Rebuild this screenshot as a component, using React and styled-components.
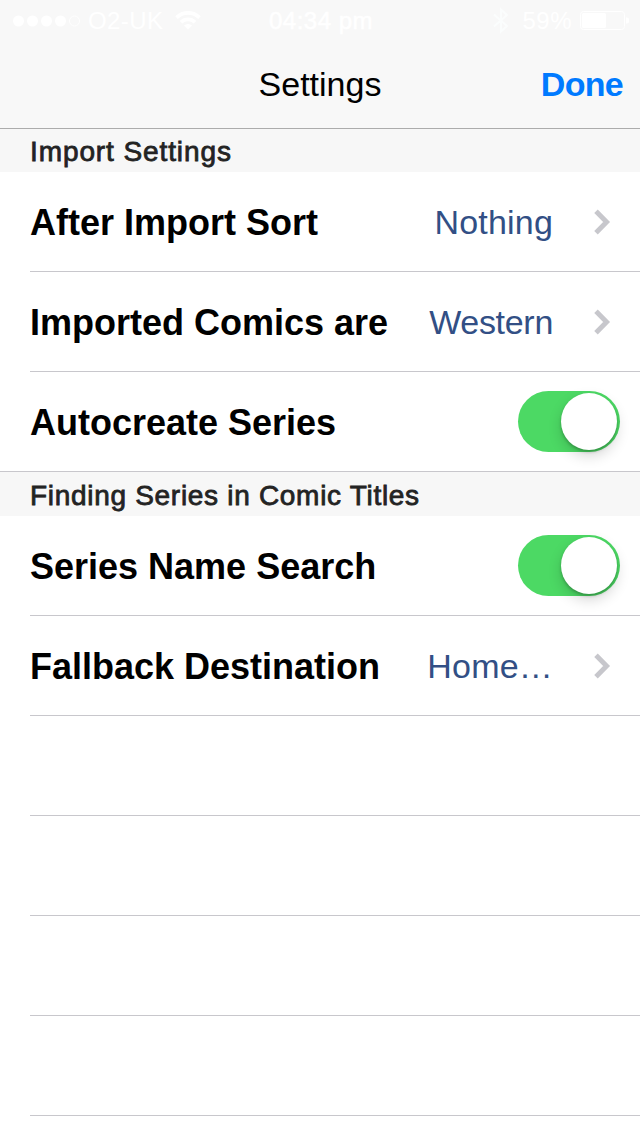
import React from 'react';
import styled, { createGlobalStyle } from 'styled-components';

const GlobalStyle = createGlobalStyle`
  * {
    box-sizing: border-box;
  }

  body {
    margin: 0;
    background: white;
    font-family: 'Liberation Sans', Arial, sans-serif;
  }
`;

const Screen = styled.div`
  width: 640px;
  height: 1136px;
  overflow: hidden;
  background: white;
`;

const Header = styled.header`
  height: 129px;
  background: #f8f8f8;
  border-bottom: 1px solid #acacac;
`;

const StatusBar = styled.div`
  display: grid;
  grid-template-columns: 1fr auto 1fr;
  height: 40px;
  padding: 0 11px 0 13px;
  color: white;
  font-size: 24px;
  line-height: 41px;

  svg {
    display: block;
  }
`;

const StatusGroup = styled.div`
  display: flex;
  align-items: center;
  justify-content: ${({ $end }) => ($end ? 'flex-end' : 'flex-start')};
  gap: 8px;
`;

const Carrier = styled.span`
  margin: 0 4px 0 -1px;
  letter-spacing: 0.4px;
`;

const Percent = styled.span`
  margin-left: 5px;
  letter-spacing: 0.5px;
`;

const Clock = styled.span`
  -webkit-text-stroke: 0.6px white;
  letter-spacing: 0.5px;
`;

const NavBar = styled.nav`
  display: grid;
  grid-template-columns: 1fr auto 1fr;
  align-items: center;
  height: 88px;
  padding-right: 17px;
`;

const Title = styled.h1`
  grid-column: 2;
  margin: 0 0 0 17px;
  font-size: 34px;
  font-weight: normal;
  line-height: 40px;
`;

const DoneButton = styled.button`
  justify-self: end;
  padding: 0;
  border: 0;
  background: none;
  color: #007aff;
  font: bold 34px/40px 'Liberation Sans', Arial, sans-serif;
  letter-spacing: -0.7px;
`;

const SectionHeader = styled.h2`
  height: ${({ $first }) => ($first ? '43px' : '44px')};
  margin: 0;
  padding: ${({ $first }) => ($first ? '7px' : '8px')} 0 0 30px;
  background: #f7f7f7;
  color: #232323;
  font-size: 28px;
  font-weight: normal;
  line-height: 32px;
  letter-spacing: ${({ $first }) => ($first ? '0.9px' : '0.7px')};
  -webkit-text-stroke: 0.8px #232323;
`;

const Row = styled.div`
  display: flex;
  align-items: center;
  height: 100px;
  margin-left: ${({ $last }) => ($last ? '0' : '30px')};
  padding-left: ${({ $last }) => ($last ? '30px' : '0')};
  padding-right: 20px;
  border-bottom: 1px solid #c8c7cc;
`;

const Label = styled.span`
  flex: 1;
  padding-top: 2px;
  font-size: 36px;
  font-weight: bold;
  line-height: 42px;
  white-space: nowrap;
`;

const Value = styled.span`
  margin-right: 41px;
  color: #324f85;
  font-size: 34px;
  line-height: 40px;
  letter-spacing: ${({ $tracking = '0.2px' }) => $tracking};
`;

const Toggle = styled.div`
  display: flex;
  justify-content: flex-end;
  align-items: flex-start;
  width: 102px;
  height: 61px;
  padding: 2px 3px;
  border-radius: 31px;
  background: #4cd964;
`;

const Knob = styled.div`
  width: 56px;
  height: 57px;
  border-radius: 50%;
  background: white;
  box-shadow: 0 6px 14px rgba(0, 0, 0, 0.16), 0 2px 3px rgba(0, 0, 0, 0.22);
`;

const Disclosure = styled.svg`
  margin: 1px 9px 0 0;
`;

const Chevron = () => (
  <Disclosure width="17" height="26" viewBox="0 0 17 26" fill="none">
    <path d="M2 2.2 L12.6 13 L2 23.8" stroke="#c7c7cc" strokeWidth="4.9" />
  </Disclosure>
);

const Signal = () => (
  <svg width="68" height="12" viewBox="0 0 68 12" fill="white">
    {[5.5, 19.5, 33.5, 47.5].map((cx) => (
      <circle key={cx} cx={cx} cy="6" r="5.5" />
    ))}
    <circle cx="61.5" cy="6" r="5" fill="none" stroke="white" />
  </svg>
);

const Wifi = () => (
  <svg width="26" height="19" viewBox="0 0 26 19" fill="none" stroke="white" strokeWidth="3.6">
    <path d="M1.5 6.6 a16.3 16.3 0 0 1 23 0" />
    <path d="M6 11.2 a10 10 0 0 1 14 0" />
    <path d="M13 18.5 L9 14.6 a5.7 5.7 0 0 1 8 0 Z" fill="white" stroke="none" />
  </svg>
);

const Bluetooth = () => (
  <svg width="16" height="27" viewBox="0 0 16 27" fill="none" stroke="#fbfdfd" strokeWidth="2">
    <path d="M1 7.5 L14 19 L8 24.5 V2.5 L14 8 L1 19.5" />
  </svg>
);

const Battery = () => (
  <svg width="49" height="19" viewBox="0 0 49 19">
    <rect x="0.5" y="0.5" width="44" height="18" rx="3" fill="none" stroke="white" />
    <rect x="2" y="2" width="24" height="15" rx="1.5" fill="white" />
    <path d="M46 6.5 h1 a2 2 0 0 1 2 2 v2 a2 2 0 0 1 -2 2 h-1 Z" fill="white" />
  </svg>
);

const sections = [
  {
    title: 'Import Settings',
    rows: [
      { label: 'After Import Sort', value: 'Nothing' },
      { label: 'Imported Comics are', value: 'Western', tracking: '-0.3px' },
      { label: 'Autocreate Series' },
    ],
  },
  {
    title: 'Finding Series in Comic Titles',
    rows: [
      { label: 'Series Name Search' },
      { label: 'Fallback Destination', value: 'Home…' },
    ],
  },
];

const SettingRow = ({ label, value, tracking, last }) => (
  <Row $last={last}>
    <Label>{label}</Label>
    {value ? (
      <>
        <Value $tracking={tracking}>{value}</Value>
        <Chevron />
      </>
    ) : (
      <Toggle>
        <Knob />
      </Toggle>
    )}
  </Row>
);

const App = () => (
  <Screen>
    <GlobalStyle />
    <Header>
      <StatusBar>
        <StatusGroup>
          <Signal />
          <Carrier>O2-UK</Carrier>
          <Wifi />
        </StatusGroup>
        <Clock>04:34 pm</Clock>
        <StatusGroup $end>
          <Bluetooth />
          <Percent>59%</Percent>
          <Battery />
        </StatusGroup>
      </StatusBar>
      <NavBar>
        <Title>Settings</Title>
        <DoneButton>Done</DoneButton>
      </NavBar>
    </Header>
    {sections.map(({ title, rows }, i) => (
      <section key={title}>
        <SectionHeader $first={i === 0}>{title}</SectionHeader>
        {rows.map((row, j) => (
          <SettingRow key={row.label} {...row} last={i === 0 && j === rows.length - 1} />
        ))}
      </section>
    ))}
    {[0, 1, 2, 3].map((n) => (
      <Row key={n} />
    ))}
  </Screen>
);

export default App;
